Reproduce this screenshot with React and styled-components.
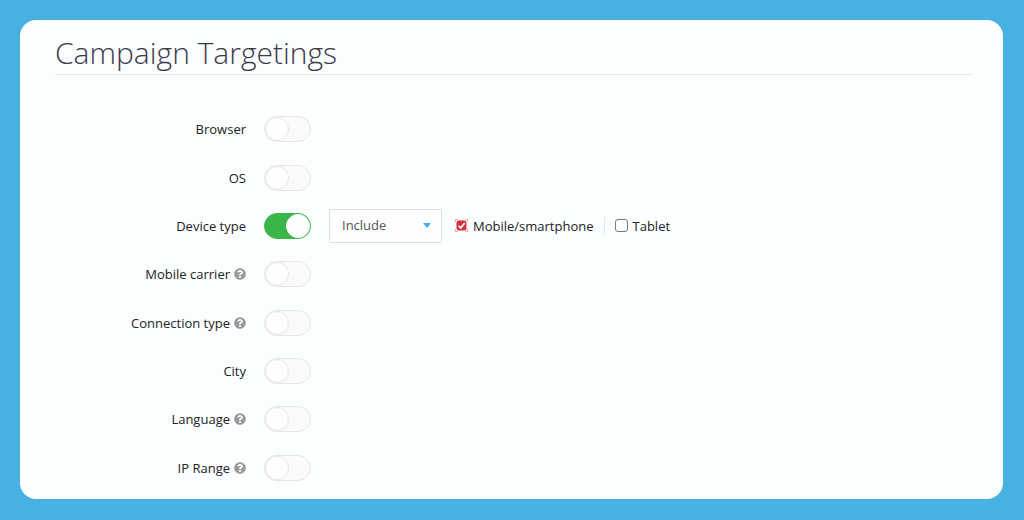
import { useState } from 'react';
import styled, { createGlobalStyle } from 'styled-components';
import { FaQuestionCircle } from 'react-icons/fa';

const GlobalStyle = createGlobalStyle`
    *,
    *::before {
        box-sizing: border-box;
    }

    body {
        margin: 0;
        background: #47b1e1;
        color: #222;
        font-family: "Open Sans", "Noto Sans", sans-serif;
        font-size: 13px;
        line-height: 20px;
    }
`

const targetings = [
    { id: 'browser', name: 'Browser' },
    { id: 'os', name: 'OS' },
    { id: 'device', name: 'Device type' },
    { id: 'carrier', name: 'Mobile carrier', help: true },
    { id: 'connection', name: 'Connection type', help: true },
    { id: 'city', name: 'City' },
    { id: 'language', name: 'Language', help: true },
    { id: 'ip', name: 'IP Range', help: true },
];

const CheckOption = ({ label, checked, onChange }) => {
    return (
        <OptionLabel>
            <CheckBox>
                <input type="checkbox" checked={checked} onChange={onChange} />
                {checked && (
                    <svg viewBox="0 0 13 13" aria-hidden="true">
                        <path d="M.5 3V.5H3M10 .5h2.5V3M12.5 10v2.5H10M3 12.5H.5V10" fill="none" stroke="#eda3a8" />
                        <rect x="1.5" y="1.5" width="10" height="10" rx="2.5" fill="#d2303a" />
                        <path d="M3.6 6.8l2.2 2.2 3.9-5" fill="none" stroke="#fff" strokeWidth="1.8" />
                    </svg>
                )}
            </CheckBox>
            {label}
        </OptionLabel>
    )
}

const DeviceOptions = () => {
    const [mode, setMode] = useState('include');
    const [devices, setDevices] = useState({ mobile: true, tablet: false });

    const toggle = (key) => setDevices({ ...devices, [key]: !devices[key] });

    return (
        <Options>
            <SelectBox>
                <select aria-label="Device type rule" value={mode} onChange={(e) => setMode(e.target.value)}>
                    <option value="include">Include</option>
                    <option value="exclude">Exclude</option>
                </select>
                <svg viewBox="0 0 8 5" aria-hidden="true">
                    <path d="M0 0h8L4 5z" fill="#3fb0e6" />
                </svg>
            </SelectBox>
            <CheckOption label="Mobile/smartphone" checked={devices.mobile} onChange={() => toggle('mobile')} />
            <Divider />
            <CheckOption label="Tablet" checked={devices.tablet} onChange={() => toggle('tablet')} />
        </Options>
    )
}

const App = () => {
    const [enabled, setEnabled] = useState({ device: true });

    return (
        <Page>
            <GlobalStyle />
            <Panel>
                <Title>Campaign Targetings</Title>
                <Rows>
                    {targetings.map(({ id, name, help }) => (
                        <Row key={id}>
                            <RowLabel htmlFor={id}>
                                {name}
                                {help && <FaQuestionCircle className="help-icon" aria-hidden="true" />}
                            </RowLabel>
                            <Switch
                                id={id}
                                type="checkbox"
                                role="switch"
                                checked={Boolean(enabled[id])}
                                onChange={() => setEnabled({ ...enabled, [id]: !enabled[id] })}
                            />
                            {id === 'device' && enabled.device && <DeviceOptions />}
                        </Row>
                    ))}
                </Rows>
            </Panel>
        </Page>
    )
}

const Page = styled.div`
    min-height: 100vh;
    display: flex;
    padding: 20px 21px 21px 20px;
`

const Panel = styled.main`
    flex: 1;
    display: flex;
    flex-direction: column;
    padding: 11px 30px 7px 35px;
    border-radius: 16px;
    background: #fbfeff;
`

const Title = styled.h1`
    margin: 0;
    border-bottom: 1px solid #e8e6e9;
    color: #3b3a48;
    font-size: 30px;
    font-weight: 300;
    line-height: 43px;
`

const Rows = styled.div`
    flex: 1;
    display: grid;
    grid-auto-rows: 1fr;
    margin-top: 30px;
`

const Row = styled.div`
    display: flex;
    align-items: center;
    min-height: 40px;
`

const RowLabel = styled.label`
    width: 191px;
    margin-right: 18px;
    display: flex;
    align-items: center;
    justify-content: flex-end;
    gap: 4px;

    .help-icon {
        width: 12px;
        height: 12px;
        color: #999;
    }
`

const Switch = styled.input`
    appearance: none;
    flex: none;
    display: flex;
    justify-content: flex-start;
    width: 47px;
    height: 26px;
    margin: 0;
    border: 1px solid #e9e5e7;
    border-radius: 13px;
    background: #fafafb;
    cursor: pointer;

    &::before {
        content: '';
        width: 24px;
        height: 24px;
        border: 1px solid #e9e5e7;
        border-radius: 50%;
        background: #fdfeff;
    }

    &:checked {
        justify-content: flex-end;
        border-color: #3ab54a;
        background: #3ab54a;
    }

    &:checked::before {
        border-color: #fdfeff;
    }
`

const Options = styled.div`
    display: flex;
    align-items: center;
    margin-left: 18px;
`

const SelectBox = styled.div`
    display: grid;
    align-items: center;
    width: 113px;
    margin-right: 13px;

    select,
    svg {
        grid-area: 1 / 1;
    }

    select {
        appearance: none;
        height: 34px;
        padding: 0 24px 2px 12px;
        border: 1px solid #dddde0;
        border-radius: 2px;
        background: #fcfeff;
        color: #555;
        font: inherit;
    }

    svg {
        justify-self: end;
        width: 8px;
        height: 5px;
        margin-right: 11px;
        pointer-events: none;
    }
`

const OptionLabel = styled.label`
    display: flex;
    align-items: center;
    gap: 5px;
`

const CheckBox = styled.span`
    display: grid;
    width: 13px;
    height: 13px;

    input,
    svg {
        grid-area: 1 / 1;
        width: 13px;
        height: 13px;
    }

    input {
        appearance: none;
        margin: 0;
        border: 1px solid #777;
        border-radius: 3px;
        background: #fff;
    }

    input:checked {
        border-color: transparent;
        background: none;
    }

    svg {
        pointer-events: none;
    }
`

const Divider = styled.span`
    width: 1px;
    height: 18px;
    margin: 0 10px;
    background: #e6e6ea;
`

export default App
